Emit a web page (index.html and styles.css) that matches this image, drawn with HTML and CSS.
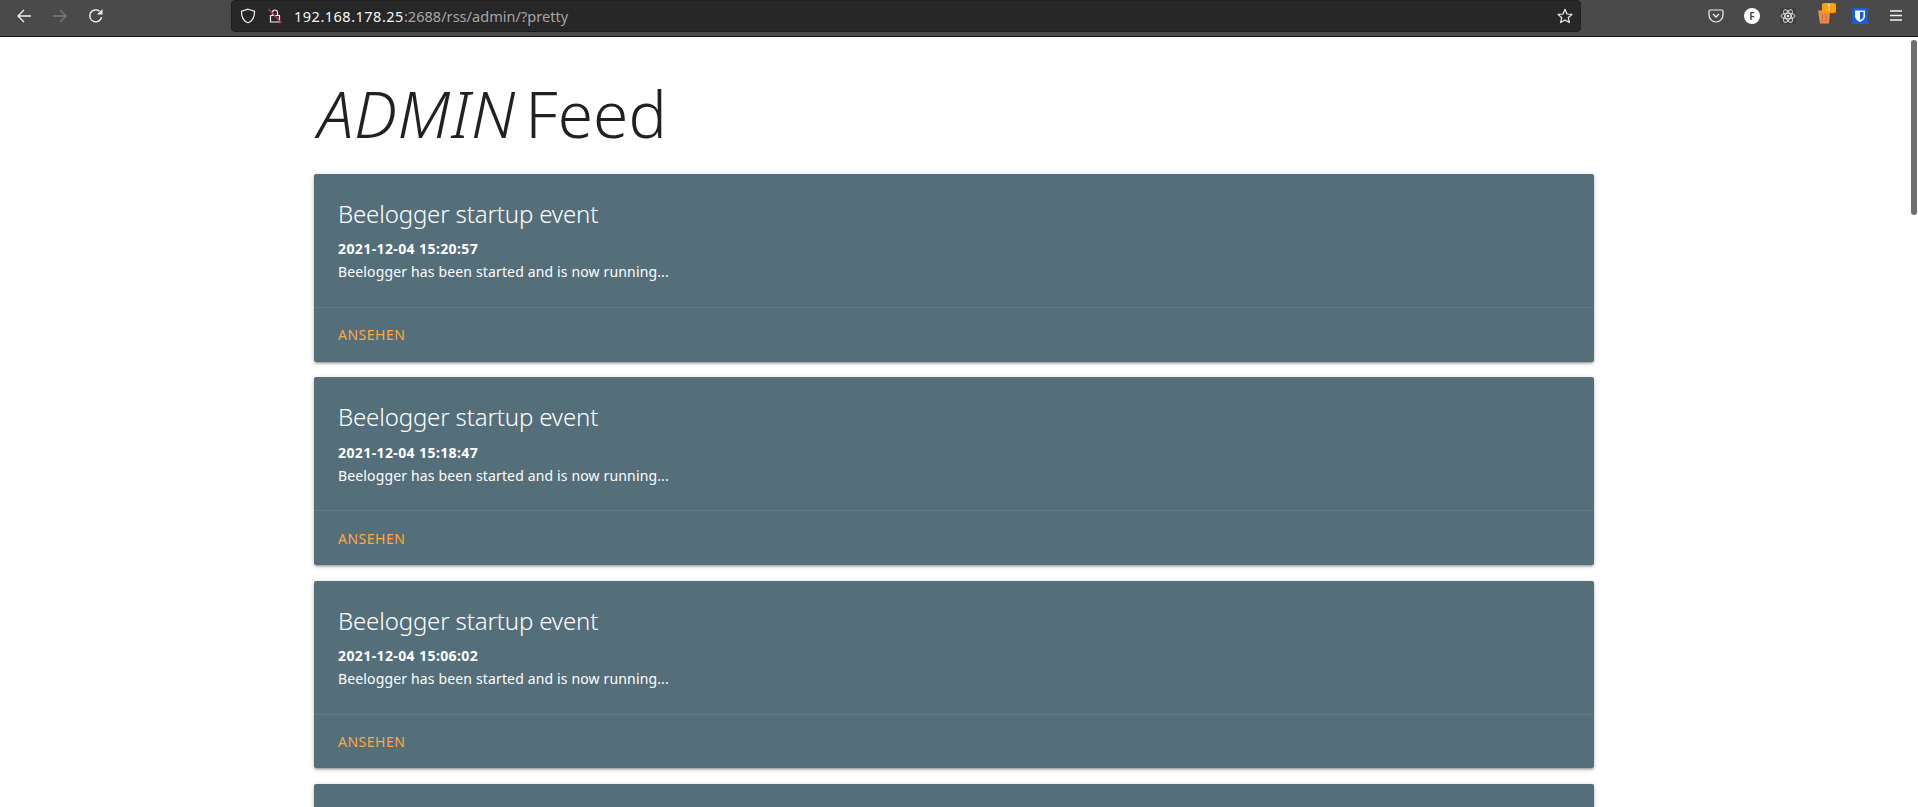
FILE: index.html
```html
<!DOCTYPE html>
<html lang="de">
<head>
<meta charset="utf-8">
<title>ADMIN Feed</title>
<link rel="stylesheet" href="styles.css">
</head>
<body>
<header class="toolbar">
  <nav class="nav-buttons">
    <svg class="icon" viewBox="0 0 16 16"><path d="M15 8H2M8 2 2 8l6 6" fill="none" stroke="#f4f4f4" stroke-width="1.3"/></svg>
    <svg class="icon" viewBox="0 0 16 16"><path d="M1 8h13M8 2l6 6-6 6" fill="none" stroke="#7d7d7d" stroke-width="1.3"/></svg>
    <svg class="icon" viewBox="0 0 16 16"><path d="M13.6 9.2A6 6 0 1 1 11.5 3.2" fill="none" stroke="#f4f4f4" stroke-width="1.4"/><path d="M14.5 1v5.5H9z" fill="#f4f4f4"/></svg>
  </nav>
  <div class="urlbar">
    <svg class="icon shield" viewBox="0 0 16 16"><path d="M8 1.200 14.500 3.200c.3 5.800-1.700 9.600-6.500 11.600C3.200 12.800 1.200 9 1.500 3.200z" fill="none" stroke="#f0f0f0" stroke-width="1.200"/></svg>
    <svg class="icon lock" viewBox="0 0 16 16"><path d="M5.500 7V4.500a2.500 2.500 0 0 1 5 0V7M3.500 7.500h9v6.500h-9z" fill="none" stroke="#f0f0f0" stroke-width="1.200"/><path d="M1.500 1 14.500 15" stroke="#e22850" stroke-width="1.300"/></svg>
    <span class="url"><span class="url-host">192.168.178.25</span>:2688/rss/admin/?pretty</span>
    <svg class="icon star" viewBox="0 0 16 16"><path d="M8 1.300 10 6l5 .4-3.800 3.300 1.200 4.900L8 12l-4.400 2.600 1.200-4.900L1 6.400 6 6z" fill="none" stroke="#f0f0f0" stroke-width="1.200" stroke-linejoin="round"/></svg>
  </div>
  <div class="extensions">
    <svg class="icon pocket" viewBox="0 0 16 16"><path d="M2.500 2h11A1.500 1.500 0 0 1 15 3.500V7A7 7 0 0 1 1 7V3.500A1.500 1.500 0 0 1 2.500 2z" fill="none" stroke="#f0f0f0" stroke-width="1.200"/><path d="M5 6l3 3 3-3" fill="none" stroke="#f0f0f0" stroke-width="1.300"/></svg>
    <span class="ext-f">F</span>
    <svg class="icon react" viewBox="0 0 16 16"><rect width="16" height="16" fill="#3f3f3f"/><g fill="none" stroke="#e8e8e8" stroke-width=".9"><ellipse cx="8" cy="8" rx="7" ry="2.800"/><ellipse cx="8" cy="8" rx="7" ry="2.800" transform="rotate(60 8 8)"/><ellipse cx="8" cy="8" rx="7" ry="2.800" transform="rotate(120 8 8)"/></g><circle cx="8" cy="8" r="1.300" fill="#e8e8e8"/></svg>
    <span class="ext-trash">
      <svg class="icon" viewBox="0 0 16 16"><path d="M2 2.500h12l-1 13H4z" fill="#ee8a4e"/><path d="M6.500 6v8M10 6v8" stroke="#c9683a" stroke-width="1"/></svg>
      <span class="badge">1</span>
    </span>
    <svg class="icon bitwarden" viewBox="0 0 16 16"><rect width="16" height="16" rx="1.500" fill="#175ddc"/><path d="M3 2.500h10v6c0 2.500-2.500 4.500-5 5.500-2.500-1-5-3-5-5.500z" fill="#fff"/><path d="M8 4h3.500v4.500c0 1.500-1.800 2.800-3.500 3.600z" fill="#175ddc"/></svg>
    <svg class="icon menu" viewBox="0 0 16 16"><path d="M2 3h12M2 7.500h12M2 12h12" stroke="#f4f4f4" stroke-width="1.300"/></svg>
  </div>
</header>
<div class="viewport">
  <main class="content">
    <h1 class="page-title"><em class="title-em">ADMIN</em> Feed</h1>
    <article class="card">
      <div class="card-body">
        <h2 class="card-title">Beelogger startup event</h2>
        <p class="card-date">2021-12-04 15:20:57</p>
        <p class="card-text">Beelogger has been started and is now running...</p>
      </div>
      <div class="card-action"><a class="card-link" href="#">ANSEHEN</a></div>
    </article>
    <article class="card">
      <div class="card-body">
        <h2 class="card-title">Beelogger startup event</h2>
        <p class="card-date">2021-12-04 15:18:47</p>
        <p class="card-text">Beelogger has been started and is now running...</p>
      </div>
      <div class="card-action"><a class="card-link" href="#">ANSEHEN</a></div>
    </article>
    <article class="card">
      <div class="card-body">
        <h2 class="card-title">Beelogger startup event</h2>
        <p class="card-date">2021-12-04 15:06:02</p>
        <p class="card-text">Beelogger has been started and is now running...</p>
      </div>
      <div class="card-action"><a class="card-link" href="#">ANSEHEN</a></div>
    </article>
    <article class="card">
      <div class="card-body"></div>
    </article>
  </main>
  <div class="scrollbar-thumb"></div>
</div>
</body>
</html>
```

FILE: styles.css
```css
* { box-sizing: border-box; }
html, body { margin: 0; height: 100%; overflow: hidden; }
body {
  display: flex;
  flex-direction: column;
  background: #fff;
  font-family: "Noto Sans", "Open Sans", sans-serif;
}
.icon { display: block; width: 16px; height: 16px; flex: none; }

.toolbar {
  flex: none;
  display: flex;
  align-items: center;
  height: 37px;
  padding-bottom: 4px;
  background: #4a4a4a;
  border-bottom: 1px solid #161616;
}
.nav-buttons {
  display: flex;
  gap: 20px;
  width: 231px;
  padding-left: 16px;
}
.urlbar {
  display: flex;
  align-items: center;
  width: 1350px;
  height: 32px;
  background: #272727;
  border: 1px solid #1e1e1e;
  border-radius: 4px;
  padding: 0 7px 0 8px;
}
.shield { margin-right: 11px; }
.lock { margin-right: 11px; }
.url {
  flex: 1;
  font-size: 14.500px;
  color: #a6a6a6;
  white-space: nowrap;
  letter-spacing: .04px;
}
.url-host { color: #f6f6f6; letter-spacing: .5px; }
.extensions {
  display: flex;
  align-items: center;
  gap: 20px;
  margin-left: 127px;
}
.ext-f {
  display: flex;
  align-items: center;
  justify-content: center;
  width: 16px;
  height: 16px;
  border-radius: 50%;
  background: #fff;
  color: #4a4a4a;
  font-size: 10px;
  font-weight: 700;
}
.ext-trash { position: relative; display: block; }
.badge {
  position: absolute;
  top: -5px;
  left: 6px;
  width: 14px;
  height: 10px;
  border-radius: 2px;
  background: #ffa000;
  color: #fff;
  font-size: 9px;
  line-height: 10px;
  text-align: center;
}

.viewport {
  flex: 1;
  position: relative;
  overflow: hidden;
}
.scrollbar-thumb {
  position: absolute;
  top: 3px;
  right: 1px;
  width: 6px;
  height: 175px;
  border-radius: 3px;
  background: #6f6f6f;
}
.content {
  width: 1280px;
  margin: 0 0 0 314px;
}
.page-title {
  margin: 0;
  padding: 41px 0 0;
  height: 137px;
  font-size: 64px;
  line-height: 72px;
  font-weight: 300;
  color: #212121;
}
.title-em {
  font-style: italic;
  letter-spacing: .7px;
  padding-left: 3.700px;
  margin-right: -7.300px;
}
.card {
  height: 187.800px;
  margin-bottom: 15.530px;
  background: #546e7a;
  border-radius: 2px;
  color: #fff;
  box-shadow: 0 2px 2px 0 rgba(0,0,0,.14), 0 3px 1px -2px rgba(0,0,0,.12), 0 1px 5px 0 rgba(0,0,0,.2);
}
.card-body {
  height: 134px;
  padding: 24px;
  border-bottom: 1px solid rgba(160,160,160,.2);
}
.card-title {
  margin: 0 0 8.300px;
  font-size: 24px;
  line-height: 32px;
  font-weight: 300;
  letter-spacing: -.15px;
}
.card-date {
  margin: 0;
  font-size: 14px;
  line-height: 22px;
  font-weight: 700;
  letter-spacing: .4px;
}
.card-text {
  margin: 1px 0 0;
  font-size: 14px;
  line-height: 22px;
  letter-spacing: .15px;
}
.card-action { padding: 15.300px 24px; }
.card-link {
  color: #ffa940;
  font-size: 14px;
  line-height: 22px;
  letter-spacing: .5px;
  text-decoration: none;
}
```
